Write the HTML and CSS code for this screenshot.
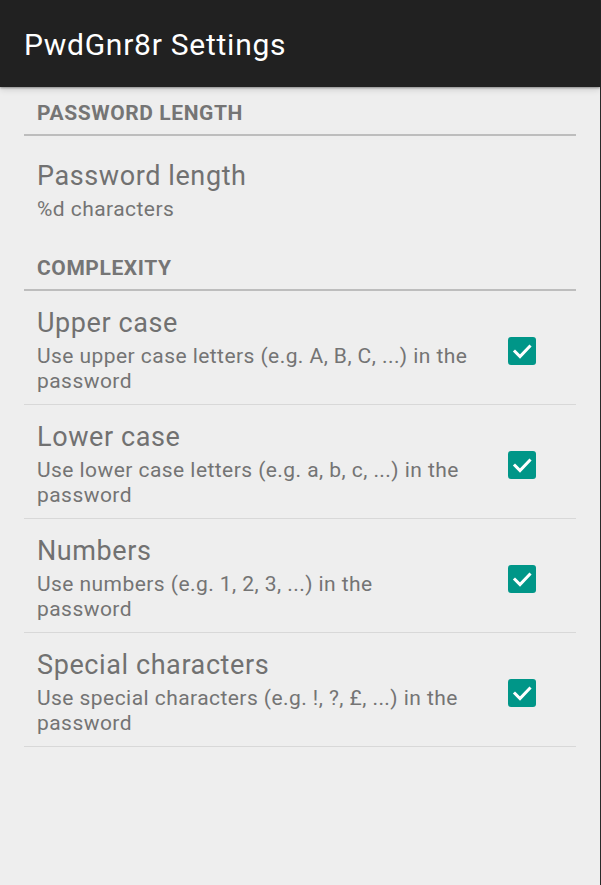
FILE: index.html
```html
<!DOCTYPE html>
<html lang="en">
<head>
<meta charset="utf-8">
<title>PwdGnr8r Settings</title>
<link rel="stylesheet" href="styles.css">
</head>
<body>
<div class="screen">
  <header class="toolbar">
    <h1 class="toolbar-title">PwdGnr8r Settings</h1>
  </header>
  <main class="prefs">
    <div class="category">PASSWORD LENGTH</div>
    <div class="pref pref-first">
      <div class="pref-text">
        <div class="pref-title">Password length</div>
        <div class="pref-summary">%d characters</div>
      </div>
    </div>

    <div class="category">COMPLEXITY</div>
    <div class="pref pref-divided">
      <div class="pref-text">
        <div class="pref-title">Upper case</div>
        <div class="pref-summary">Use upper case letters (e.g. A, B, C, ...) in the<br>password</div>
      </div>
      <span class="checkbox"><svg viewBox="0 0 28 28" width="28" height="28"><path d="M7 14.5 L12 19.5 L21.5 9.5" fill="none" stroke="#fff" stroke-width="3" stroke-linecap="square"/></svg></span>
    </div>
    <div class="pref pref-divided">
      <div class="pref-text">
        <div class="pref-title">Lower case</div>
        <div class="pref-summary">Use lower case letters (e.g. a, b, c, ...) in the<br>password</div>
      </div>
      <span class="checkbox"><svg viewBox="0 0 28 28" width="28" height="28"><path d="M7 14.5 L12 19.5 L21.5 9.5" fill="none" stroke="#fff" stroke-width="3" stroke-linecap="square"/></svg></span>
    </div>
    <div class="pref pref-divided">
      <div class="pref-text">
        <div class="pref-title">Numbers</div>
        <div class="pref-summary">Use numbers (e.g. 1, 2, 3, ...) in the<br>password</div>
      </div>
      <span class="checkbox"><svg viewBox="0 0 28 28" width="28" height="28"><path d="M7 14.5 L12 19.5 L21.5 9.5" fill="none" stroke="#fff" stroke-width="3" stroke-linecap="square"/></svg></span>
    </div>
    <div class="pref pref-divided">
      <div class="pref-text">
        <div class="pref-title">Special characters</div>
        <div class="pref-summary">Use special characters (e.g. !, ?, £, ...) in the<br>password</div>
      </div>
      <span class="checkbox"><svg viewBox="0 0 28 28" width="28" height="28"><path d="M7 14.5 L12 19.5 L21.5 9.5" fill="none" stroke="#fff" stroke-width="3" stroke-linecap="square"/></svg></span>
    </div>
  </main>
</div>
</body>
</html>
```
FILE: styles.css
```css
html, body {
  margin: 0;
  padding: 0;
  background: #eeeeee;
}

body {
  font-family: Roboto, "Noto Sans", "Liberation Sans", sans-serif;
}

.screen {
  width: 600px;
  min-height: 885px;
  border-right: 1px solid #2a2a2a;
  background: #eeeeee;
}

.toolbar {
  position: relative;
  z-index: 1;
  height: 87px;
  box-sizing: border-box;
  padding: 3px 24px 0;
  display: flex;
  align-items: center;
  background: #212121;
  box-shadow: 0 1px 2px rgba(0, 0, 0, 0.35), 0 3px 6px rgba(0, 0, 0, 0.12);
}

.toolbar-title {
  margin: 0;
  font-size: 30px;
  line-height: 36px;
  font-weight: 400;
  letter-spacing: 0.025em;
  color: #ffffff;
}

.prefs {
  margin: 0 24px 0 24px;
  display: flex;
  flex-direction: column;
}

.category {
  padding: 14px 0 9px 13px;
  font-size: 21px;
  line-height: 24px;
  font-weight: 700;
  letter-spacing: 0.028em;
  color: #757575;
  border-bottom: 2px solid #bdbdbd;
}

.pref {
  display: flex;
  align-items: center;
  padding: 16px 40px 10px 13px;
}

.pref-first {
  padding-top: 24px;
  padding-bottom: 20px;
}

.pref-divided {
  border-bottom: 1px solid #d8d8d8;
}

.pref-text {
  flex: 1;
  display: flex;
  flex-direction: column;
  gap: 5px;
}

.pref-title {
  font-size: 27px;
  line-height: 32px;
  letter-spacing: 0.022em;
  color: #717171;
  white-space: nowrap;
}

.pref-summary {
  font-size: 21px;
  line-height: 25px;
  letter-spacing: 0.021em;
  color: #747474;
  white-space: nowrap;
}

.checkbox {
  flex: none;
  width: 28px;
  height: 28px;
  border-radius: 3px;
  background: #009688;
  display: flex;
}
```
